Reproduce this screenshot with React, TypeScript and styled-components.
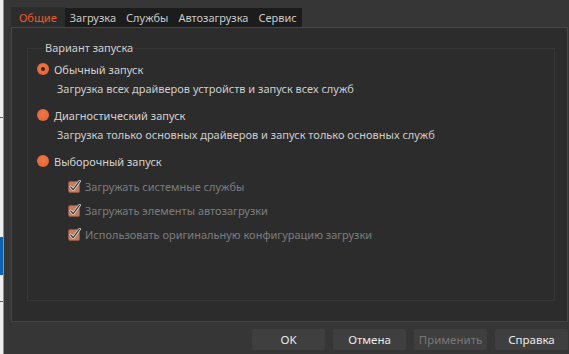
import styled, { createGlobalStyle } from "styled-components";

const GlobalStyle = createGlobalStyle`
  html, body {
    margin: 0;
    padding: 0;
    background: #363636;
  }
  #root {
    height: 354px;
  }
`;

const Screen = styled.div`
  display: flex;
  height: 354px;
  font-family: "Noto Sans", "Open Sans", sans-serif;
  font-size: 11px;
`;

const BackStrip = styled.div`
  width: 3px;
  border-right: 1px solid #8e8e8e;
  background: linear-gradient(
    to bottom,
    #eeeeee 0,
    #eeeeee 117px,
    #1e6fbf 117px,
    #1e6fbf 118px,
    #eeeeee 118px,
    #eeeeee 237px,
    #0a63b3 237px,
    #0a63b3 275px,
    #eeeeee 275px,
    #eeeeee 301px,
    #1e6fbf 301px,
    #1e6fbf 302px,
    #eeeeee 302px
  );
`;

const Window = styled.div`
  flex: 1;
  display: flex;
  flex-direction: column;
  padding: 7px 1px 4px 7px;
  background: #363636;
`;

const TabBar = styled.div`
  display: flex;
  align-items: flex-end;
  height: 20px;
`;

const TabStrip = styled.div`
  display: flex;
  height: 19px;
  background: #1c1c1c;
`;

const Tab = styled.div<{ $active?: boolean }>`
  display: flex;
  align-items: center;
  padding: 0 ${(p) => (p.$active ? "8px" : "5px")};
  height: ${(p) => (p.$active ? "20px" : "19px")};
  background: ${(p) => (p.$active ? "#2c2c2c" : "transparent")};
  color: ${(p) => (p.$active ? "#f05a28" : "#c9c9c9")};
  white-space: nowrap;
`;

const Panel = styled.div`
  flex: 1;
  display: flex;
  flex-direction: column;
  background: #2c2c2c;
  border: 1px solid #464646;
  padding: 12px 12px 20px 15px;
`;

const Group = styled.fieldset`
  flex: 1;
  margin: 0;
  border: 1px solid #363636;
  padding: 4px 0 0 9px;
  display: flex;
  flex-direction: column;
`;

const GroupTitle = styled.legend`
  margin-left: 6px;
  padding: 0 2px;
  color: #cfcfcf;
  line-height: 16px;
`;

const Option = styled.div`
  display: flex;
  flex-direction: column;
  & + & {
    margin-top: 8px;
  }
`;

const RadioRow = styled.label`
  display: flex;
  align-items: center;
  gap: 5px;
  height: 18px;
  color: #d2d2d2;
`;

const Radio = styled.span<{ $checked?: boolean }>`
  flex: none;
  width: 12px;
  height: 12px;
  border-radius: 50%;
  background: radial-gradient(circle at 50% 40%, #f2774a, #e2602f);
  display: flex;
  align-items: center;
  justify-content: center;

  &::after {
    content: "";
    display: ${(p) => (p.$checked ? "block" : "none")};
    width: 4px;
    height: 4px;
    border-radius: 50%;
    background: #4a1d10;
  }
`;

const Description = styled.div`
  margin: 2px 0 0 20px;
  line-height: 18px;
  color: #cdcdcd;
`;

const CheckList = styled.div`
  display: flex;
  flex-direction: column;
  gap: 6px;
  margin: 7px 0 0 31px;
`;

const CheckRow = styled.label`
  display: flex;
  align-items: center;
  gap: 4px;
  height: 18px;
  color: #7d7d7d;
`;

const ButtonRow = styled.div`
  display: flex;
  justify-content: flex-end;
  gap: 8px;
  padding-top: 7px;
`;

const Button = styled.button<{ $disabled?: boolean }>`
  width: 73px;
  height: 21px;
  border: none;
  border-radius: 2px;
  background: #3f3f3f;
  color: ${(p) => (p.$disabled ? "#777777" : "#eaeaea")};
  font-family: inherit;
  font-size: 11.5px;
  padding: 0;
`;

function CheckBox() {
  return (
    <svg width="13" height="13" viewBox="0 0 13 13">
      <rect x="0.5" y="1.5" width="11" height="11" rx="1.5" fill="#c57c5f" stroke="#8e5740" />
      <path d="M2.8 7 L5.2 9.6 L11.6 1.2" fill="none" stroke="#e8e8e8" strokeWidth="2.6" strokeLinecap="round" strokeLinejoin="round" />
      <path d="M2.8 7 L5.2 9.6 L11.6 1.2" fill="none" stroke="#3a3a3a" strokeWidth="1.3" strokeLinecap="round" strokeLinejoin="round" />
    </svg>
  );
}

const tabs = ["Загрузка", "Службы", "Автозагрузка", "Сервис"];

const options = [
  {
    title: "Обычный запуск",
    text: "Загрузка всех драйверов устройств и запуск всех служб",
    checked: true,
  },
  {
    title: "Диагностический запуск",
    text: "Загрузка только основных драйверов и запуск только основных служб",
    checked: false,
  },
];

const checks = [
  "Загружать системные службы",
  "Загружать элементы автозагрузки",
  "Использовать оригинальную конфигурацию загрузки",
];

export default function App() {
  return (
    <>
      <GlobalStyle />
      <Screen>
        <BackStrip />
        <Window>
          <TabBar>
            <Tab $active>Общие</Tab>
            <TabStrip>
              {tabs.map((t) => (
                <Tab key={t}>{t}</Tab>
              ))}
            </TabStrip>
          </TabBar>
          <Panel>
            <Group>
              <GroupTitle>Вариант запуска</GroupTitle>
              {options.map((o) => (
                <Option key={o.title}>
                  <RadioRow>
                    <Radio $checked={o.checked} />
                    {o.title}
                  </RadioRow>
                  <Description>{o.text}</Description>
                </Option>
              ))}
              <Option>
                <RadioRow>
                  <Radio />
                  Выборочный запуск
                </RadioRow>
                <CheckList>
                  {checks.map((c) => (
                    <CheckRow key={c}>
                      <CheckBox />
                      {c}
                    </CheckRow>
                  ))}
                </CheckList>
              </Option>
            </Group>
          </Panel>
          <ButtonRow>
            <Button>OK</Button>
            <Button>Отмена</Button>
            <Button $disabled>Применить</Button>
            <Button>Справка</Button>
          </ButtonRow>
        </Window>
      </Screen>
    </>
  );
}
